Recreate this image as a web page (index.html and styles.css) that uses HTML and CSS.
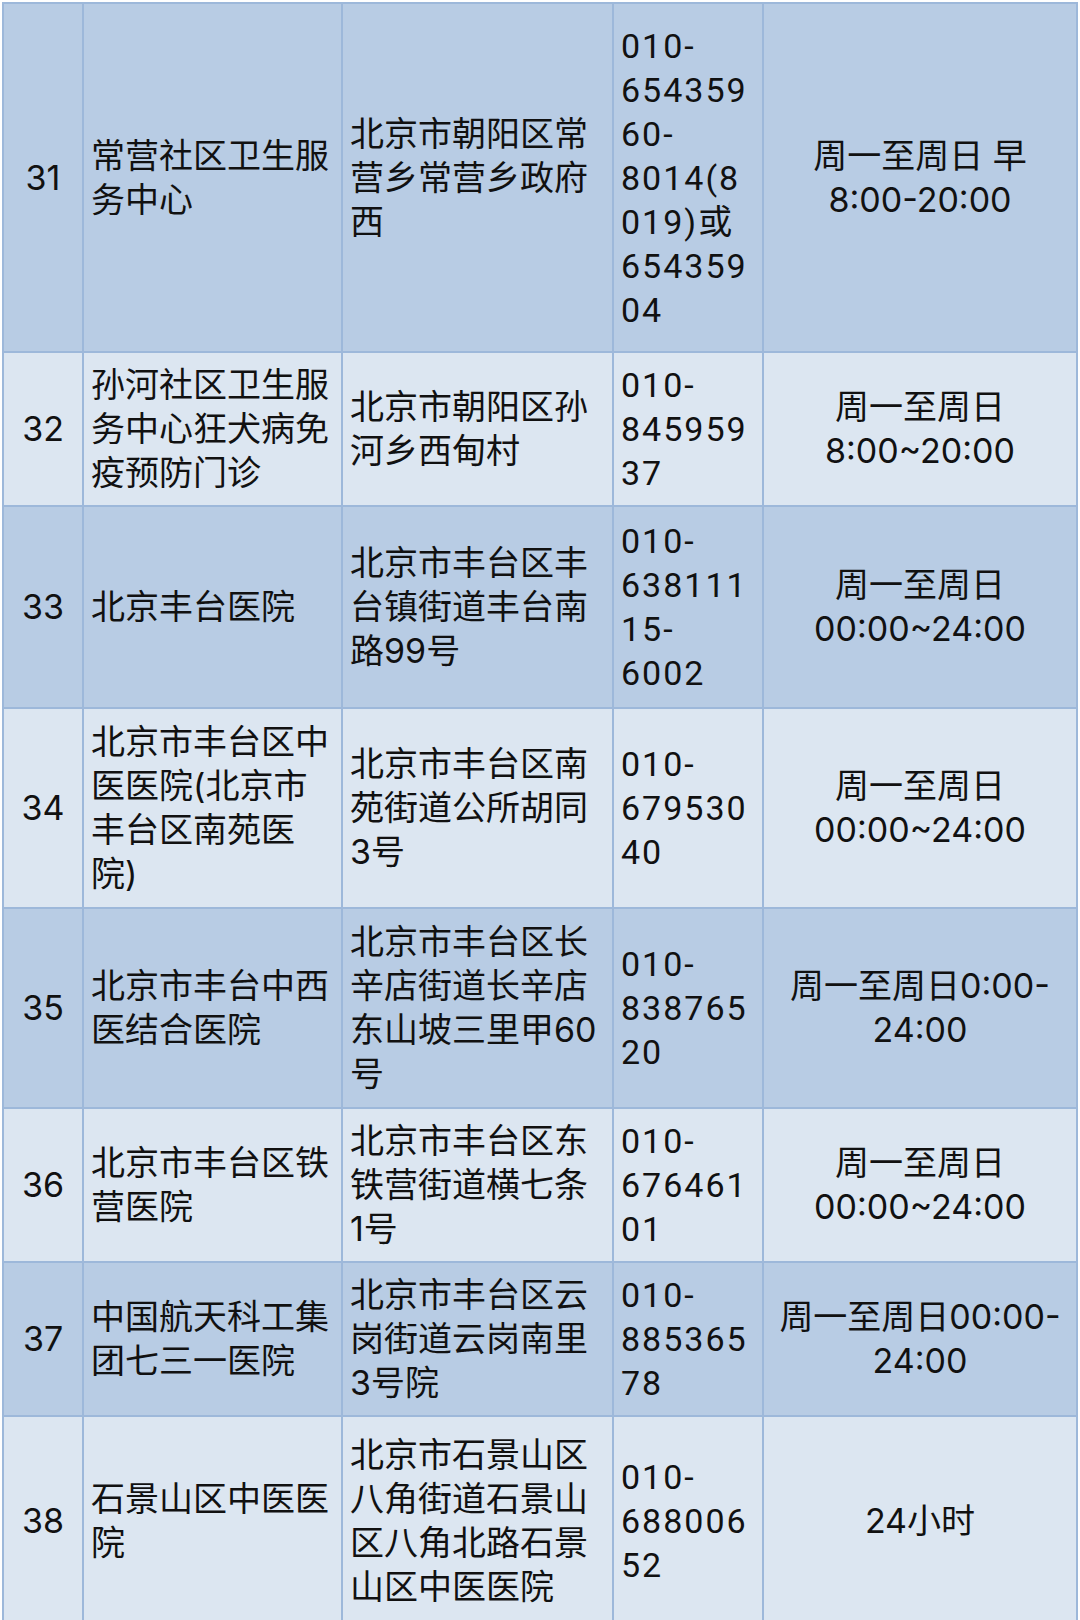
FILE: index.html
```html
<!DOCTYPE html>
<html lang="zh-CN">
<head>
<meta charset="utf-8">
<title>医院列表</title>
<link rel="stylesheet" href="styles.css">
</head>
<body>
<table class="list">
  <colgroup>
    <col class="c-no">
    <col class="c-name">
    <col class="c-addr">
    <col class="c-tel">
    <col class="c-time">
  </colgroup>
  <tbody>
    <tr class="dark">
      <td class="no">31</td>
      <td>常营社区卫生服务中心</td>
      <td class="addr">北京市朝阳区常营乡常营乡政府西</td>
      <td class="tel">010-<wbr>65435960-<wbr>8014(8019)或<wbr>65435904</td>
      <td class="time">周一至周日 早<wbr>8:00-20:00</td>
    </tr>
    <tr class="light">
      <td class="no">32</td>
      <td>孙河社区卫生服务中心狂犬病免疫预防门诊</td>
      <td class="addr">北京市朝阳区孙河乡西甸村</td>
      <td class="tel">010-<wbr>84595937</td>
      <td class="time">周一至周日 8:00~20:00</td>
    </tr>
    <tr class="dark">
      <td class="no">33</td>
      <td>北京丰台医院</td>
      <td class="addr">北京市丰台区丰台镇街道丰台南路99号</td>
      <td class="tel">010-<wbr>63811115-<wbr>6002</td>
      <td class="time">周一至周日 00:00~24:00</td>
    </tr>
    <tr class="light">
      <td class="no">34</td>
      <td>北京市丰台区中医医院(北京市丰台区南苑医院)</td>
      <td class="addr">北京市丰台区南苑街道公所胡同3号</td>
      <td class="tel">010-<wbr>67953040</td>
      <td class="time">周一至周日 00:00~24:00</td>
    </tr>
    <tr class="dark">
      <td class="no">35</td>
      <td>北京市丰台中西医结合医院</td>
      <td class="addr">北京市丰台区长辛店街道长辛店东山坡三里甲60号</td>
      <td class="tel">010-<wbr>83876520</td>
      <td class="time">周一至周日0:00-<wbr>24:00</td>
    </tr>
    <tr class="light">
      <td class="no">36</td>
      <td>北京市丰台区铁营医院</td>
      <td class="addr">北京市丰台区东铁营街道横七条1号</td>
      <td class="tel">010-<wbr>67646101</td>
      <td class="time">周一至周日 00:00~24:00</td>
    </tr>
    <tr class="dark">
      <td class="no">37</td>
      <td>中国航天科工集团七三一医院</td>
      <td class="addr">北京市丰台区云岗街道云岗南里3号院</td>
      <td class="tel">010-<wbr>88536578</td>
      <td class="time">周一至周日00:00-<wbr>24:00</td>
    </tr>
    <tr class="light">
      <td class="no">38</td>
      <td>石景山区中医医院</td>
      <td class="addr">北京市石景山区八角街道石景山区八角北路石景山区中医医院</td>
      <td class="tel">010-<wbr>68800652</td>
      <td class="time">24小时</td>
    </tr>
  </tbody>
</table>
</body>
</html>
```
FILE: styles.css
```css
html, body {
  margin: 0;
  padding: 0;
  background: #ffffff;
}

body {
  padding: 2px 0 0 2px;
  font-family: Inter, "Noto Sans CJK SC", sans-serif;
  color: #111111;
}

.list {
  width: 1076px;
  table-layout: fixed;
  border-collapse: collapse;
  font-size: 34px;
  line-height: 44px;
}

.c-no { width: 80px; }
.c-name { width: 259px; }
.c-addr { width: 271px; }
.c-tel { width: 150px; }
.c-time { width: 314px; }

.list td {
  border: 2px solid #9db8da;
  padding: 10px 7px;
  vertical-align: middle;
  text-align: left;
  overflow-wrap: break-word;
}

.list .addr {
  padding-right: 12px;
}

.list .tel {
  font-family: Roboto, "Noto Sans CJK SC", sans-serif;
  letter-spacing: 2px;
  padding-right: 9px;
}

.list .no,
.list .time {
  text-align: center;
}

.dark td { background: #b8cce4; }
.light td { background: #dce6f1; }

.list tr:nth-child(1) { height: 349px; }
.list tr:nth-child(2) { height: 151px; }
.list tr:nth-child(3) { height: 202px; }
.list tr:nth-child(4) { height: 200px; }
.list tr:nth-child(5) { height: 200px; }
.list tr:nth-child(6) { height: 152px; }
.list tr:nth-child(7) { height: 151px; }
.list tr:nth-child(8) { height: 209px; }
```
